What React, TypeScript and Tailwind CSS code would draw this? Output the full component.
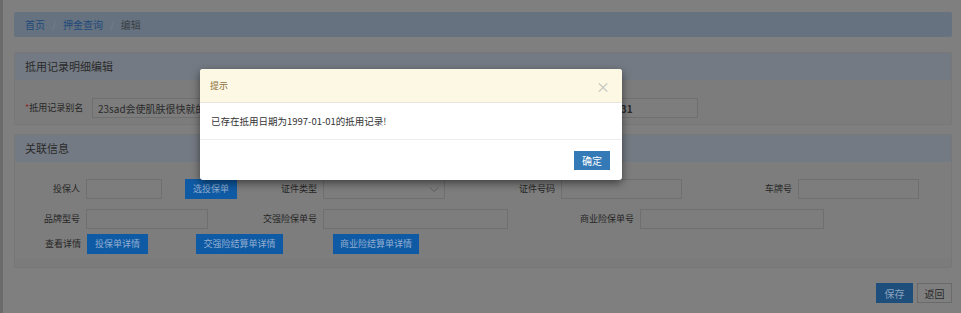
import React from "react";

const font = { fontFamily: '"Noto Sans CJK SC", "Noto Sans", sans-serif' };

function Label({ w, children }: { w: number; children: React.ReactNode }) {
  return (
    <div
      className="shrink-0 whitespace-nowrap pr-[6px] text-right text-[9px] leading-[20px] text-[#262626]"
      style={{ width: w }}
    >
      {children}
    </div>
  );
}

function Input({ w, ml = 0 }: { w: number; ml?: number }) {
  return (
    <div
      className="h-[20px] shrink-0 border border-[#6f6f6f] bg-[#7d7d7d]"
      style={{ width: w, marginLeft: ml }}
    />
  );
}

function Btn({ w, ml = 0, children }: { w: number; ml?: number; children: React.ReactNode }) {
  return (
    <div
      className="flex h-[20px] shrink-0 items-center justify-center whitespace-nowrap bg-[#0f5aa4] text-[9px] text-[#93aed0]"
      style={{ width: w, marginLeft: ml }}
    >
      {children}
    </div>
  );
}

export default function App() {
  return (
    <div className="relative h-[313px] w-[961px] overflow-hidden bg-[#7f7f7f]" style={font}>
      <div className="absolute left-0 top-0 h-full w-[3px] bg-[#6b6b6b]" />
      <div className="flex flex-col pl-[14px] pr-[9px] pt-[12px]">
        <div className="flex h-[25px] items-center rounded-[2px] bg-[#66727f] pl-[11px] text-[10px]">
          <span className="text-[#1f4a7a]">首页</span>
          <span className="mx-[7px] text-[#77808a]">/</span>
          <span className="text-[#1f4a7a]">押金查询</span>
          <span className="mx-[7px] text-[#77808a]">/</span>
          <span className="text-[#3a3f45]">编辑</span>
        </div>

        <div className="mt-[15px] rounded-[2px] border border-[#777777] bg-[#7c7c7c]">
          <div className="flex h-[27px] items-center bg-[#747a83] pl-[10px] text-[11px] text-[#2a2a2a]">
            抵用记录明细编辑
          </div>
          <div className="flex h-[44px] items-center pt-[12px]">
            <div className="w-[77px] whitespace-nowrap pl-[10px] text-[9px] leading-[20px] text-[#262626]">
              <span className="text-[#8a2a2a]">*</span>抵用记录别名
            </div>
            <div className="flex h-[20px] w-[340px] items-center whitespace-nowrap border border-[#6f6f6f] bg-[#7d7d7d] pl-[5px] text-[10px] text-[#2a2a2a]">
              23sad会使肌肤很快就的了
            </div>
            <div className="ml-[136px] flex h-[20px] w-[130px] items-center whitespace-nowrap border border-[#6f6f6f] bg-[#7d7d7d] pl-[9px] text-[10px] font-bold text-[#2a2a2a]">
              2017-12-31
            </div>
          </div>
        </div>

        <div className="mt-[9px] rounded-[2px] border border-[#777777] bg-[#7b7b7b] pb-[8px]">
          <div className="flex h-[27px] items-center bg-[#747a83] pl-[10px] text-[11px] text-[#2a2a2a]">
            关联信息
          </div>
          <div className="flex flex-col bg-[#7d7d7d] pb-[4px] pt-[17px]">
            <div className="flex items-center">
              <Label w={71}>投保人</Label>
              <Input w={76} />
              <Btn w={52} ml={23}>选投保单</Btn>
              <Label w={86}>证件类型</Label>
              <div className="relative h-[20px] w-[122px] shrink-0 border border-[#6f6f6f] bg-[#7d7d7d]">
                <svg className="absolute right-[5px] top-[6px]" width="10" height="7" viewBox="0 0 10 7">
                  <path d="M1 1.5 L5 5.5 L9 1.5" fill="none" stroke="#5e5e5e" strokeWidth="1" />
                </svg>
              </div>
              <Label w={116}>证件号码</Label>
              <Input w={121} />
              <Label w={116}>车牌号</Label>
              <Input w={121} />
            </div>
            <div className="mt-[10px] flex items-center">
              <Label w={71}>品牌型号</Label>
              <Input w={122} />
              <Label w={115}>交强险保单号</Label>
              <Input w={185} />
              <Label w={132}>商业险保单号</Label>
              <Input w={184} />
            </div>
            <div className="mt-[4px] flex h-[22px] items-center">
              <Label w={72}>查看详情</Label>
              <Btn w={61}>投保单详情</Btn>
              <Btn w={87} ml={48}>交强险结算单详情</Btn>
              <Btn w={86} ml={50}>商业险结算单详情</Btn>
            </div>
          </div>
        </div>

        <div className="mt-[15px] flex justify-end">
          <div className="flex h-[20px] w-[37px] items-center justify-center bg-[#1d4e7c] text-[10px] text-[#8aa3bf]">
            保存
          </div>
          <div className="ml-[4px] flex h-[20px] w-[35px] items-center justify-center border border-[#6a6a6a] bg-[#7f7f7f] text-[10px] text-[#2a2a2a]">
            返回
          </div>
        </div>
      </div>

      <div className="absolute left-[200px] top-[69px] flex h-[111px] w-[422px] flex-col overflow-hidden rounded-[3px] bg-white shadow-[0_3px_9px_rgba(0,0,0,0.5)]">
        <div className="flex h-[34px] items-center justify-between border-b border-[#e8e6de] bg-[#fcf8e3] pl-[10px] pr-[12px]">
          <span className="text-[9px] text-[#8a6d3b]">提示</span>
          <span className="text-[14px] leading-none text-[#c4c2bb]">×</span>
        </div>
        <div className="flex h-[36px] items-center whitespace-nowrap pl-[11px] text-[9.5px] text-[#333333]">
          已存在抵用日期为1997-01-01的抵用记录!
        </div>
        <div className="flex flex-1 items-center justify-end border-t border-[#eeeeee] pr-[12px]">
          <div className="flex h-[19px] w-[36px] items-center justify-center bg-[#337ab7] text-[10px] text-white">
            确定
          </div>
        </div>
      </div>
    </div>
  );
}
